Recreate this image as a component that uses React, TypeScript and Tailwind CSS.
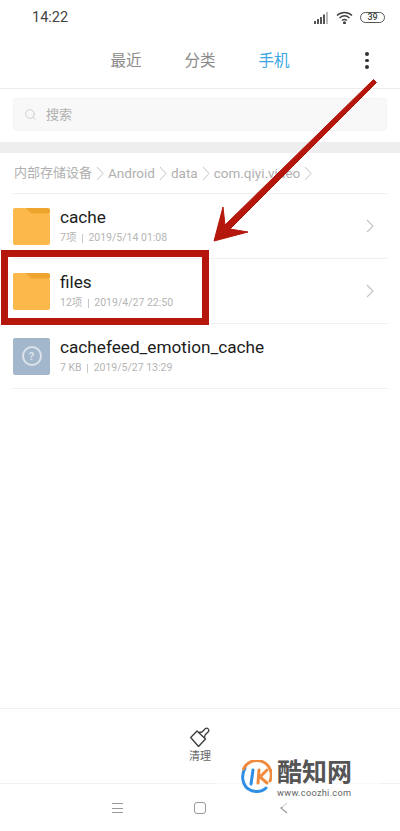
import React from "react";
import { Search } from "lucide-react";

const CJK = "font-['Roboto','Noto_Sans_CJK_SC',sans-serif]";

function Crumb({ label, small }: { label: string; small?: boolean }) {
  return (
    <>
      <span className={small ? "text-[13px]" : ""}>{label}</span>
      <svg width="8" height="15" viewBox="0 0 8 15" fill="none" stroke="#c4c4c4" strokeWidth="1" className="mx-[4px]">
        <path d="M1 1l6 6.500L1 14" />
      </svg>
    </>
  );
}

function FolderIcon() {
  return (
    <svg width="37" height="37" viewBox="0 0 37 37" className="shrink-0">
      <path d="M2 0h10l6 5h17a2 2 0 0 1 2 2v28a2 2 0 0 1-2 2H2a2 2 0 0 1-2-2V2a2 2 0 0 1 2-2z" fill="#fdb84b" />
      <path d="M12 0h23a2 2 0 0 1 2 2v3.500H18z" fill="#eea52f" />
    </svg>
  );
}

function UnknownIcon() {
  return (
    <div className="flex h-[37px] w-[37px] shrink-0 items-center justify-center rounded-[2px] bg-[#a3b7cc]">
      <div className="flex h-[20px] w-[20px] items-center justify-center rounded-full border-2 border-[#dbe3ec] text-[11px] font-bold leading-none text-[#dbe3ec]">
        ?
      </div>
    </div>
  );
}

function FileRow({ name, count, date, icon, arrow }: { name: string; count: string; date: string; icon: React.ReactNode; arrow?: boolean }) {
  return (
    <div className="flex h-[65px] items-center border-b border-[#f0f0f0]">
      {icon}
      <div className="ml-[10px] flex-1">
        <div className="text-[17.200px] leading-[22px] text-[#1c1c1c]">{name}</div>
        <div className="mt-[2px] flex items-center text-[10.500px] leading-[16px] text-[#b5b5b5]">
          <span>{count}</span>
          <span className="mx-[5.500px] h-[9px] w-px bg-[#c8c8c8]" />
          <span>{date}</span>
        </div>
      </div>
      {arrow && (
        <svg width="8" height="14" viewBox="0 0 8 14" fill="none" stroke="#c2c2c2" strokeWidth="1.100" className="mr-[13px]">
          <path d="M1 1l6 6-6 6" />
        </svg>
      )}
    </div>
  );
}

export default function App() {
  return (
    <div className={`relative flex h-[831px] w-[400px] flex-col overflow-hidden bg-white ${CJK}`}>
      {/* status bar */}
      <div className="flex h-[35px] items-center justify-between pl-[32px] pr-[15px] text-[14.500px] text-[#444]">
        <span>14:22</span>
        <div className="flex items-center gap-[7px]">
          <svg width="15" height="12" viewBox="0 0 15 12" fill="#555">
            <rect x="0" y="9" width="2" height="3" />
            <rect x="3" y="7" width="2" height="5" />
            <rect x="6" y="5" width="2" height="7" />
            <rect x="9" y="2.500" width="2" height="9.500" />
            <rect x="12" y="0" width="2" height="12" fill="#bbb" />
          </svg>
          <svg width="17" height="13" viewBox="0 0 17 13" fill="none" stroke="#444" strokeWidth="1.500">
            <path d="M1 4.500c4.300-4 10.700-4 15 0M3.500 7c3-2.600 7-2.600 10 0M6 9.500c1.500-1.200 3.500-1.200 5 0" />
            <circle cx="8.500" cy="11.800" r="0.800" fill="#444" />
          </svg>
          <div className="flex h-[11px] w-[25px] items-center justify-center rounded-full border border-[#555] text-[9px] font-medium leading-none text-[#444]">
            39
          </div>
        </div>
      </div>

      {/* tabs */}
      <div className="relative flex h-[54px] items-center justify-center gap-[43px] border-b border-[#ececec] text-[15.500px]">
        <span className="text-[#8a8a8a]">最近</span>
        <span className="text-[#8a8a8a]">分类</span>
        <span className="text-[#3aa6e4]">手机</span>
        <div className="absolute left-[365px] top-[17px] flex flex-col gap-[3px]">
          <span className="h-[3.500px] w-[3.500px] rounded-full bg-[#333]" />
          <span className="h-[3.500px] w-[3.500px] rounded-full bg-[#333]" />
          <span className="h-[3.500px] w-[3.500px] rounded-full bg-[#333]" />
        </div>
      </div>

      {/* search */}
      <div className="px-[13px] pt-[9px]">
        <div className="flex h-[33px] items-center rounded-[4px] border border-[#f3f3f3] bg-[#f8f8f8] pl-[10px] text-[13px] text-[#b0b0b0]">
          <Search className="h-[13px] w-[13px] text-[#c8c8c8]" strokeWidth={1.5} />
          <span className="ml-[9px]">搜索</span>
        </div>
      </div>

      <div className="mt-[11px] h-[11px] bg-[#eeeeee]" />

      {/* breadcrumb + list */}
      <div className="px-[13px]">
        <div className="flex h-[41px] items-center border-b border-[#f0f0f0] pl-[1px] text-[13.500px] text-[#b0b0b0]">
          <Crumb label="内部存储设备" small />
          <Crumb label="Android" />
          <Crumb label="data" />
          <Crumb label="com.qiyi.video" />
        </div>
        <FileRow name="cache" count="7项" date="2019/5/14 01:08" icon={<FolderIcon />} arrow />
        <FileRow name="files" count="12项" date="2019/4/27 22:50" icon={<FolderIcon />} arrow />
        <FileRow name="cachefeed_emotion_cache" count="7 KB" date="2019/5/27 13:29" icon={<UnknownIcon />} />
      </div>

      {/* bottom action */}
      <div className="mt-auto flex h-[75px] flex-col items-center border-t border-[#f0f0f0] pt-[18px]">
        <svg width="20" height="20" viewBox="0 0 20 20" fill="none" stroke="#3a3a3a" strokeWidth="1.300" strokeLinejoin="round">
          <path d="M0.700 10.500L7 4l8.500 8-7 7.500z" />
          <path d="M9 5.500l3-.5 3.500-3.500a2.200 2.200 0 0 1 3 3L15 8l-.5 3" />
        </svg>
        <span className="mt-[3px] text-[11px] leading-[14px] text-[#666]">清理</span>
      </div>

      {/* nav bar */}
      <div className="flex h-[48px] items-start justify-center border-t border-[#f0f0f0] pt-[18px]">
        <div className="flex w-[176px] items-center justify-between">
          <div className="flex w-[11px] flex-col gap-[3.500px]">
            <span className="h-px bg-[#999]" />
            <span className="h-px bg-[#999]" />
            <span className="h-px bg-[#999]" />
          </div>
          <div className="h-[12px] w-[12px] rounded-[3px] border-[1.500px] border-[#999]" />
          <div className="flex w-[11px] justify-end">
            <svg width="8" height="12" viewBox="0 0 8 12" fill="none" stroke="#999" strokeWidth="1.200">
              <path d="M7 1L1 6l6 5" />
            </svg>
          </div>
        </div>
      </div>

      {/* red annotations */}
      <svg width="400" height="831" viewBox="0 0 400 831" className="pointer-events-none absolute left-0 top-0">
        <path d="M373.500 79.500L225 225 223 207 214 241 248 232 230 229 376.500 82.500z" fill="#b5170d" stroke="#b5170d" strokeWidth="1" strokeLinejoin="round" />
      </svg>
      <div className="absolute left-[1px] top-[250px] h-[75px] w-[208px] border-[7px] border-[#b5170d]" />

      {/* watermark */}
      <div className="absolute left-[216px] top-[757px] h-[50px] w-[165px] bg-white/60" />
      <div className="absolute left-[240px] top-[760px]">
        <svg width="32" height="33" viewBox="0 0 32 33" fill="none" strokeLinecap="round">
          <path d="M5 8C0 18 3 31 17 31.500c4 0 7-1.500 9-3.500" stroke="#2f8fe6" strokeWidth="3" />
          <path d="M3.500 9A14.500 14.500 0 0 1 30 21" stroke="#f08a3c" strokeWidth="3" />
          <path d="M13 10l-2 14" stroke="#2f8fe6" strokeWidth="3" />
          <path d="M19 10l-1 13M27 10l-7 7 7 6" stroke="#f08a3c" strokeWidth="3" />
        </svg>
      </div>
      <div className="absolute left-[277px] top-[758px] flex flex-col items-start">
        <span className="text-[25px] font-bold leading-[30px] text-[#555]">酷知网</span>
        <span className="-mt-[1px] text-[9.200px] leading-[12px] tracking-[0.300px] text-[#666]">www.coozhi.com</span>
      </div>
    </div>
  );
}
